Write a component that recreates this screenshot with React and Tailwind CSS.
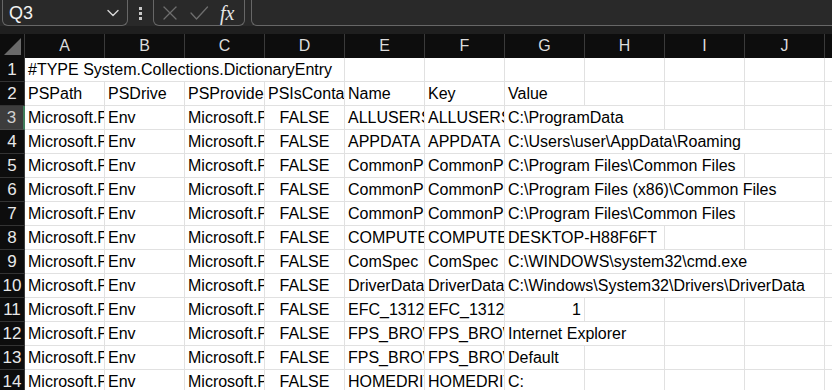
import React from 'react';

// --- sheet data: [text, span, align] per cell, null = empty ---
const cols = ['A', 'B', 'C', 'D', 'E', 'F', 'G', 'H', 'I', 'J'];
const MS = 'Microsoft.PowerShell.Core\\Environment::';

const envRows = [
  ['ALLUSERSPROFILE', 'C:\\ProgramData', 2],
  ['APPDATA', 'C:\\Users\\user\\AppData\\Roaming', 4],
  ['CommonProgramFiles', 'C:\\Program Files\\Common Files', 3],
  ['CommonProgramFiles(x86)', 'C:\\Program Files (x86)\\Common Files', 4],
  ['CommonProgramW6432', 'C:\\Program Files\\Common Files', 3],
  ['COMPUTERNAME', 'DESKTOP-H88F6FT', 2],
  ['ComSpec', 'C:\\WINDOWS\\system32\\cmd.exe', 4],
  ['DriverData', 'C:\\Windows\\System32\\Drivers\\DriverData', 4],
  ['EFC_13124_1592913036', '1', 1, 'right'],
  ['FPS_BROWSER_APP_PROFILE_STRING', 'Internet Explorer', 2],
  ['FPS_BROWSER_USER_PROFILE_STRING', 'Default', 1],
  ['HOMEDRIVE', 'C:', 1],
];

const rows = [
  [['#TYPE System.Collections.DictionaryEntry', 4], null, null, null, null, null, null],
  [['PSPath'], ['PSDrive'], ['PSProvider'], ['PSIsContainer'], ['Name'], ['Key'], ['Value'], null, null, null],
  ...envRows.map(([name, value, span, align]) => {
    const r = [
      [MS + name], ['Env'], ['Microsoft.PowerShell.Core\\Environment'], ['FALSE', 1, 'center'],
      [name], [name], [value, span, align],
    ];
    for (let i = span; i < 4; i++) r.push(null);
    return r;
  }),
];

const Chevron = () => (
  <svg viewBox="0 0 12 8" width="12" height="8" fill="none" stroke="#d6d6d6" strokeWidth="1.4" strokeLinecap="round" strokeLinejoin="round"><polyline points="1 1.5 6 6.5 11 1.5" /></svg>
);
const IconX = () => (
  <svg viewBox="0 0 16 16" width="16" height="16" fill="none" stroke="#6e6e6e" strokeWidth="1.3" strokeLinecap="round"><line x1="2" y1="2" x2="14" y2="14" /><line x1="14" y1="2" x2="2" y2="14" /></svg>
);
const IconCheck = () => (
  <svg viewBox="0 0 20 16" width="20" height="16" fill="none" stroke="#6e6e6e" strokeWidth="1.3" strokeLinecap="round" strokeLinejoin="round"><polyline points="2 8 7.5 14 18.5 2" /></svg>
);

function Cell({ cell }) {
  const span = cell ? cell[1] || 1 : 1;
  const align = cell ? cell[2] : null;
  const alignCls = align === 'center' ? 'text-center' : align === 'right' ? 'text-right' : 'text-left';
  return (
    <div
      className={`shrink-0 h-full border-r border-b border-[#e1e1e1] overflow-hidden whitespace-nowrap px-[3px] pt-[3px] text-[16px] leading-[18px] text-black ${alignCls}`}
      style={{ width: span * 80 }}
    >
      {cell ? cell[0] : ''}
    </div>
  );
}

export default function App() {
  return (
    <div className="w-[832px] h-[390px] overflow-hidden bg-white font-['Liberation_Sans',Arial,sans-serif]">
      {/* formula bar */}
      <div className="h-[26px] bg-[#292929] flex items-stretch">
        <div className="ml-[2px] w-[126px] border border-t-0 border-[#676767] rounded-b-[6px] flex items-center justify-between pl-[6px] pr-[8px]">
          <span className="text-[18px] text-[#f2f2f2] leading-none">Q3</span>
          <Chevron />
        </div>
        <div className="w-[25px] flex flex-col items-center justify-center gap-[2px]">
          <span className="w-[3px] h-[3px] bg-[#c8c8c8]"></span>
          <span className="w-[3px] h-[3px] bg-[#c8c8c8]"></span>
          <span className="w-[3px] h-[3px] bg-[#c8c8c8]"></span>
        </div>
        <div className="w-[92px] border border-t-0 border-[#676767] rounded-b-[6px] flex items-center pl-[8px] gap-[11px]">
          <IconX />
          <IconCheck />
          <span className="font-['Liberation_Serif',serif] italic text-[20px] text-[#e6e6e6] leading-none">fx</span>
        </div>
        <div className="ml-[6px] flex-1 border-l border-b border-[#676767] rounded-bl-[6px]"></div>
      </div>
      <div className="h-[8px] bg-[#1f1f1f]"></div>

      {/* column headers */}
      <div className="h-[24px] bg-[#0d0d0d] flex">
        <div className="w-[25px] shrink-0 h-full border-r border-[#3a3a3a] flex items-end justify-end pr-[3px] pb-[3px]">
          <svg viewBox="0 0 17 17" width="17" height="17"><polygon points="17 0 17 17 0 17" fill="#6a6a6a" /></svg>
        </div>
        {cols.map(c => (
          <div key={c} className="w-[80px] shrink-0 h-full border-r border-[#3a3a3a] flex items-center justify-center text-[16px] text-[#dcdcdc]">
            {c}
          </div>
        ))}
        <div className="flex-1"></div>
      </div>

      {/* grid */}
      {rows.map((r, i) => (
        <div key={i} className="h-[24px] flex">
          <div
            className={`w-[25px] shrink-0 h-full flex items-center justify-center text-[17px] border-b ${
              i === 2
                ? 'bg-[#3d3d3d] text-[#d0d0d0] border-[#4a4a4a] border-r-2 border-r-[#3f7d5a]'
                : 'bg-[#0d0d0d] text-[#e8e8e8] border-[#333333] border-r border-r-[#3a3a3a]'
            }`}
          >
            {i + 1}
          </div>
          {r.map((cell, j) => (
            <Cell key={j} cell={cell} />
          ))}
          <div className="flex-1 h-full border-b border-[#e1e1e1]"></div>
        </div>
      ))}
    </div>
  );
}
